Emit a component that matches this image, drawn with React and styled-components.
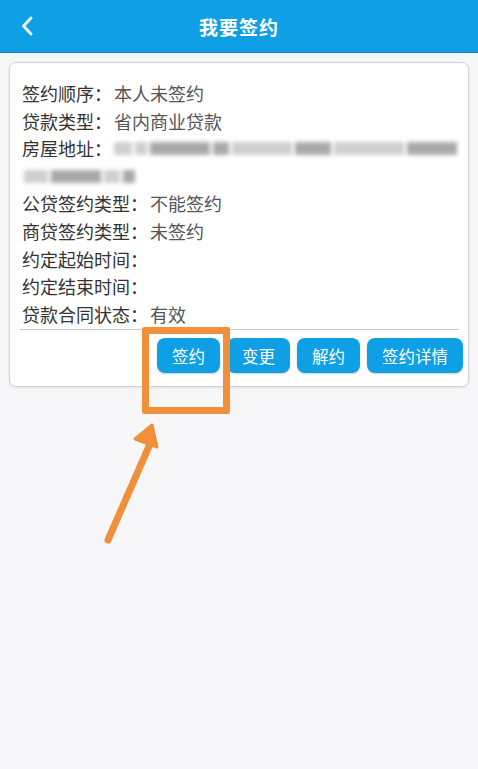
import React from "react";
import styled, { createGlobalStyle } from "styled-components";

const GlobalStyle = createGlobalStyle`
  html, body {
    margin: 0;
    padding: 0;
    background: #f7f7fa;
    font-family: "Noto Sans CJK SC", "Noto Sans", sans-serif;
  }
`;

const rows = [
  { label: "签约顺序：", value: "本人未签约" },
  { label: "贷款类型：", value: "省内商业贷款" },
  { label: "房屋地址：", blurred: true },
  { label: "公贷签约类型：", value: "不能签约" },
  { label: "商贷签约类型：", value: "未签约" },
  { label: "约定起始时间：", value: "" },
  { label: "约定结束时间：", value: "" },
  { label: "贷款合同状态：", value: "有效" },
];

const actions = ["签约", "变更", "解约", "签约详情"];

const App = () => {
  return (
    <Page>
      <GlobalStyle />
      <Header>
        <Back aria-label="back">
          <svg width="14" height="22" viewBox="0 0 14 22">
            <path
              d="M11 3 L3.5 11 L11 19"
              fill="none"
              stroke="#e8f7ff"
              strokeWidth="3"
              strokeLinecap="round"
              strokeLinejoin="round"
            />
          </svg>
        </Back>
        <Title>我要签约</Title>
      </Header>

      <Body>
        <Card>
          <InfoList>
            {rows.map((r) => (
              <Row key={r.label}>
                <Label>{r.label}</Label>
                {r.blurred ? (
                  <Blur>
                    <BlurLine>
                      <Smudge w={18} />
                      <Smudge w={12} />
                      <Smudge w={60} dark />
                      <Smudge w={16} dark />
                      <Smudge w={60} />
                      <Smudge w={36} dark />
                      <Smudge w={70} />
                      <Smudge w={50} dark />
                    </BlurLine>
                  </Blur>
                ) : (
                  <Value>{r.value}</Value>
                )}
                {r.blurred && (
                  <BlurLine second>
                    <Smudge w={24} />
                    <Smudge w={50} dark />
                    <Smudge w={16} />
                    <Smudge w={12} dark />
                  </BlurLine>
                )}
              </Row>
            ))}
          </InfoList>
          <Divider />
          <Actions>
            {actions.map((a) => (
              <ActionButton key={a}>{a}</ActionButton>
            ))}
          </Actions>
        </Card>

        {/* annotation overlay */}
        <Highlight />
        <Arrow width="80" height="130" viewBox="0 0 80 130">
          <line x1="18" y1="122" x2="60" y2="26" stroke="#f0903a" strokeWidth="7" strokeLinecap="round" />
          <polygon points="62,7 45,21 67,29" fill="#f0903a" stroke="#f0903a" strokeWidth="3" strokeLinejoin="round" />
        </Arrow>
      </Body>
    </Page>
  );
};

const Page = styled.div`
  width: 478px;
  min-height: 769px;
  background: #f7f7fa;
`;

const Header = styled.div`
  height: 52px;
  background: #0f9fe4;
  border-bottom: 1px solid #0a86c6;
  display: flex;
  align-items: center;
  justify-content: center;
  position: relative;
`;

const Back = styled.div`
  position: absolute;
  left: 20px;
  top: 15px;
  display: flex;
`;

const Title = styled.h1`
  margin: 0;
  color: #fff;
  font-size: 19px;
  font-weight: 700;
  letter-spacing: 1px;
`;

const Body = styled.div`
  position: relative;
  padding: 9px 9px 0 9px;
`;

const Card = styled.div`
  background: #fff;
  border: 1px solid #cfd3d8;
  border-radius: 7px;
  box-shadow: 0 1px 3px rgba(0, 0, 0, 0.08);
  padding: 17px 5px 13px 12px;
`;

const InfoList = styled.div`
  display: flex;
  flex-direction: column;
`;

const Row = styled.div`
  display: flex;
  flex-wrap: wrap;
  align-items: center;
  min-height: 27.6px;
  font-size: 18px;
  line-height: 27.6px;
`;

const Label = styled.span`
  color: #333;
  margin-right: 2px;
`;

const Value = styled.span`
  color: #555;
`;

const Blur = styled.div`
  flex: 1;
  display: flex;
  align-items: center;
`;

const BlurLine = styled.div`
  display: flex;
  align-items: center;
  gap: 3px;
  height: 27.6px;
  filter: blur(2px);
  ${(p) => p.second && "width: 100%; padding-left: 2px;"}
`;

const Smudge = styled.span`
  display: inline-block;
  width: ${(p) => p.w}px;
  height: 13px;
  background: ${(p) => (p.dark ? "#a9a9a9" : "#cfcfcf")};
`;

const Divider = styled.div`
  height: 1px;
  background: #c9c9c9;
  margin: 1px 4px 8px -2px;
`;

const Actions = styled.div`
  display: flex;
  justify-content: flex-end;
  gap: 7px;
`;

const ActionButton = styled.button`
  height: 35px;
  padding: 0 15px;
  border: none;
  border-radius: 8px;
  background: #0f9fe4;
  color: #fff;
  font-family: "Noto Sans CJK SC", sans-serif;
  font-size: 16.5px;
  box-shadow: 0 1px 2px rgba(0, 0, 0, 0.2);
`;

const Highlight = styled.div`
  position: absolute;
  left: 142px;
  top: 274px;
  width: 74px;
  height: 73px;
  border: 7px solid #f0903a;
  border-radius: 2px;
`;

const Arrow = styled.svg`
  position: absolute;
  left: 90px;
  top: 365px;
`;

export default App;
